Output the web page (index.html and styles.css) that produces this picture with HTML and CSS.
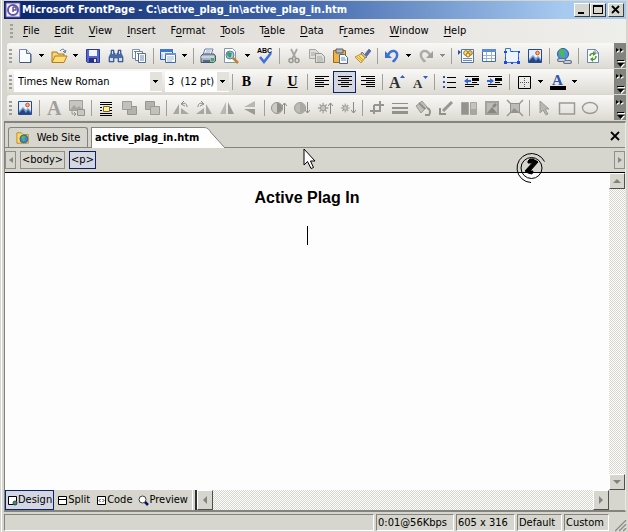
FILE: index.html
```html
<!DOCTYPE html>
<html lang="en">
<head>
<meta charset="utf-8">
<title>Microsoft FrontPage - C:\active_plag_in\active_plag_in.htm</title>
<link rel="stylesheet" href="styles.css">
</head>
<body>
<svg class="defs" width="0" height="0" aria-hidden="true">
  <defs>
    <symbol id="down" viewBox="0 0 5 3"><path d="M0 0h5v1H4v1H3v1H2V2H1V1H0z"/></symbol>
    <symbol id="pic" viewBox="0 0 16 16"><path d="M1.500 1.500h13v13h-13z" fill="#e4eefc" stroke="#1c4a9c"/><path d="M2 14v-3l4-4 3 3 2-2 3 3v3z" fill="#7c9ccc"/><path d="M2 13l4-4 3 4 2-3 3 3v1H2z" fill="#27457e"/><circle cx="10.500" cy="5" r="1.800" fill="#ffb060" stroke="#d84818"/></symbol>
    <symbol id="sun" viewBox="0 0 16 16"><path d="M7 2v12M1 8h12M3 4l8 8M11 4l-8 8" stroke="#a2a29c" stroke-width="1.500"/><circle cx="7" cy="8" r="3" fill="#c6c6be" stroke="#96968f"/></symbol>
    <symbol id="up-arrow" viewBox="0 0 5 12"><path d="M2.500 1v11M0 4l2.500-3L5 4" fill="none" stroke="#8a8a84"/></symbol>
    <symbol id="more" viewBox="0 0 12 24"><path d="M2 4l3 2-3 2zM6 4l3 2-3 2zM3 16h7v1H3zM3 19h7l-3.500 4z" fill="#fff" transform="translate(1 1)"/><path d="M2 4l3 2-3 2zM6 4l3 2-3 2zM3 16h7v1H3zM3 19h7l-3.500 4z"/></symbol>
  </defs>
</svg>
<div class="window">
  <header class="titlebar">
    <svg class="app-icon" viewBox="0 0 16 16"><path d="M1 1h14v14H1z" fill="#eeeafa" stroke="#6a5cae"/><circle cx="8" cy="8" r="5" fill="#fff" stroke="#6254a8" stroke-width="2"/><path d="M8 5v5M8 5h3v3H8" fill="none" stroke="#6254a8" stroke-width="1.500"/></svg>
    <h1>Microsoft FrontPage - C:\active_plag_in\active_plag_in.htm</h1>
    <div class="caption-buttons">
      <button aria-label="Minimize"><svg viewBox="0 0 10 10"><path d="M1 7h6v2H1z"/></svg></button><button aria-label="Maximize"><svg viewBox="0 0 10 10"><path d="M0 0h10v9H0zM1 2v6h8V2z" fill-rule="evenodd"/></svg></button><button class="close" aria-label="Close"><svg viewBox="0 0 10 10"><path d="M1 1l7 7M8 1L1 8" stroke="#000" stroke-width="1.800"/></svg></button>
    </div>
  </header>

  <nav class="menu"><span class="grip"></span>
    <button><u>F</u>ile</button><button><u>E</u>dit</button><button><u>V</u>iew</button><button><u>I</u>nsert</button><button>F<u>o</u>rmat</button><button><u>T</u>ools</button><button>T<u>a</u>ble</button><button><u>D</u>ata</button><button>F<u>r</u>ames</button><button><u>W</u>indow</button><button><u>H</u>elp</button>
  </nav>

  <div class="toolbar" role="toolbar" aria-label="Standard"><span class="grip"></span>
    <button class="tool" aria-label="New"><svg viewBox="0 0 16 16"><path d="M2.500 1.500h7l4 4v9h-11z" fill="#fafcff" stroke="#7488a8"/><path d="M9.500 1.500v4h4" fill="#cddcf0" stroke="#5a7094"/><path d="M3 14.500h11V6" fill="none" stroke="#3c587c"/></svg></button>
    <button class="drop" aria-label="New options"><svg><use href="#down"/></svg></button>
    <button class="tool" aria-label="Open"><svg viewBox="0 0 16 16"><path d="M1 14V4h5l1 2h6v3" fill="#f7d679" stroke="#a87818"/><path d="M1 14.500L4 8h12l-3 6.500z" fill="#ffdc78" stroke="#b0801c"/><path d="M9 3c2-3 5-2 5 1M12 3l2 2 1-3" fill="none" stroke="#5878a0"/></svg></button>
    <button class="drop" aria-label="Open options"><svg><use href="#down"/></svg></button>
    <button class="tool" aria-label="Save"><svg viewBox="0 0 16 16"><path d="M1.500 1.500h13v13h-12l-1-1z" fill="#5468d0" stroke="#2c3c9c"/><path d="M4 2h8v6H4z" fill="#f2f5ff"/><path d="M4 10h8v4H4z" fill="#28307c"/><path d="M9 11h2v3H9z" fill="#e8ecff"/></svg></button>
    <button class="tool" aria-label="Find"><svg viewBox="0 0 16 16"><path d="M3 2h3v3h1v2h2V5h1V2h3v3l2 4v5h-5v-4H6v4H1V9l2-4z" fill="#4a6ca8" stroke="#2a4880" stroke-width=".6"/><path d="M2 10h3v3H2zM11 10h3v3h-3zM4 3h1v3H4zM11 3h1v3h-1z" fill="#cfe0fa"/></svg></button>
    <button class="tool" aria-label="Publish"><svg viewBox="0 0 16 16"><path d="M1.500 1.500h7v9h-7z" fill="#fff" stroke="#7d93b5"/><path d="M4.500 3.500h7v9h-7z" fill="#fff" stroke="#6580a8"/><path d="M7.500 5.500h7v9h-7z" fill="#fff" stroke="#4c6c9c"/><path d="M9 8h4M9 10h4M9 12h4M3 3.500h4M6 5.500h4" stroke="#6880a8"/></svg></button>
    <span class="sep"></span>
    <button class="tool" aria-label="Task pane"><svg viewBox="0 0 16 16"><path d="M.5 1.500h12v10H.5z" fill="#e8f0ff" stroke="#2e5cb4"/><path d="M0 1h13v3H0z" fill="#3d78d8"/><path d="M5.500 5.500h10v9h-10z" fill="#fff" stroke="#3c68b0"/><path d="M5 5h11v2H5z" fill="#6594e0"/><path d="M7 9h7M7 11h7M7 13h5M2 6v5" stroke="#9cb4d8"/></svg></button>
    <button class="drop" aria-label="Task pane options"><svg><use href="#down"/></svg></button>
    <span class="sep"></span>
    <button class="tool" aria-label="Print"><svg viewBox="0 0 16 16"><path d="M5 1h8l-2 6H3z" fill="#fff" stroke="#667fa8"/><path d="M6 3h5M5 5h5" stroke="#8ba4c8"/><path d="M1 8l2-2h11l1.500 2v5l-2 1.500H1z" fill="#a8b4c4" stroke="#46566c"/><path d="M1 9h13" stroke="#eef2f6"/><path d="M3 12h7v2H3z" fill="#586880"/><path d="M11 10h3v3h-3z" fill="#38b44a"/></svg></button>
    <button class="tool" aria-label="Preview in browser"><svg viewBox="0 0 16 16"><path d="M1.500.5h8l3 3v11h-11z" fill="#fff" stroke="#8296b4"/><circle cx="7" cy="7" r="4" fill="#a0d0d8" stroke="#607c94"/><path d="M4 6c1-3 3-1 5-1-1 2 0 3-2 5-1-1-3-2-3-4" fill="#3f9a74"/><path d="M10 10l5 5" stroke="#c08030" stroke-width="2.500"/></svg></button>
    <button class="drop" aria-label="Preview options"><svg><use href="#down"/></svg></button>
    <button class="tool" aria-label="Spelling"><svg viewBox="0 0 16 16"><text class="abc" x="0" y="5">ABC</text><path d="M3 9l4 5 7-9" fill="none" stroke="#3a70d8" stroke-width="2.500"/></svg></button>
    <span class="sep"></span>
    <button class="tool" aria-label="Cut" disabled><svg viewBox="0 0 16 16"><path d="M5 1l5 10M11 1L6 11" stroke="#a6a6a0" stroke-width="1.800"/><circle cx="5" cy="12.500" r="2" fill="none" stroke="#989892" stroke-width="1.500"/><circle cx="11" cy="12.500" r="2" fill="none" stroke="#989892" stroke-width="1.500"/></svg></button>
    <button class="tool" aria-label="Copy" disabled><svg viewBox="0 0 16 16"><path d="M.5 1.500h6l3 3v6h-9z" fill="#dededa" stroke="#a4a49e"/><path d="M6.500 5.500h6l3 3v6h-9z" fill="#dededa" stroke="#94948e"/><path d="M2 5h5M2 7h4M8 9h5M8 11h6M8 13h6" stroke="#a8a8a2"/></svg></button>
    <button class="tool" aria-label="Paste"><svg viewBox="0 0 16 16"><path d="M1.500 2.500h12v12h-12z" fill="#f0b440" stroke="#9a6a18"/><path d="M4 1h7v4H4z" fill="#b4b8c0" stroke="#58606c"/><path d="M7.500 6.500h5l3 3v6h-8z" fill="#f6faff" stroke="#4c6898"/><path d="M9 10h4M9 12h5" stroke="#6c8cbc"/></svg></button>
    <button class="tool" aria-label="Format Painter"><svg viewBox="0 0 16 16"><path d="M10 6l4-5 2 2-4 5z" fill="#5c6ca8" stroke="#3c4880" stroke-width=".5"/><path d="M7 4l5 5-2 1-4-4z" fill="#b8bcc4" stroke="#74747c"/><path d="M6 6l4 4-4 5-6-6z" fill="#ffe070" stroke="#b89030"/><path d="M2 9l5 4M4 8l4 4" stroke="#c8a038"/></svg></button>
    <span class="sep"></span>
    <button class="tool" aria-label="Undo"><svg viewBox="0 0 16 16"><path d="M4 7c3-6 10-5 9 1 0 3-3 4-4 6" fill="none" stroke="#3d70d0" stroke-width="2.500"/><path d="M1 3v7h7z" fill="#3d70d0"/></svg></button>
    <button class="drop" aria-label="Undo history"><svg><use href="#down"/></svg></button>
    <button class="tool" aria-label="Redo" disabled><svg viewBox="0 0 16 16"><path d="M12 7C9 1 2 2 3 8c0 3 3 4 4 6" fill="none" stroke="#acaca6" stroke-width="2.500"/><path d="M15 3v7H8z" fill="#a0a09a"/></svg></button>
    <button class="drop" aria-label="Redo history" disabled><svg><use href="#down"/></svg></button>
    <span class="sep"></span>
    <button class="tool" aria-label="Web Component"><svg viewBox="0 0 16 16"><path d="M3.500 1.500h12v13h-12z" fill="#f4f8ff" stroke="#5474a8"/><path d="M0 2l3 2-3 3z" fill="#2050a8"/><circle cx="8" cy="5" r="2.300" fill="#ffe48c" stroke="#a07018"/><circle cx="12" cy="5" r="2.300" fill="#f4c84c" stroke="#a07018"/><circle cx="10" cy="7" r="2" fill="#ffe48c" stroke="#a07018"/><path d="M5 10.500h9M5 12.500h9" stroke="#7088b4"/></svg></button>
    <button class="tool" aria-label="Insert Table"><svg viewBox="0 0 16 16"><path d="M1.500 1.500h13v12h-13z" fill="#fff" stroke="#4268a8"/><path d="M1 1h14v3H1z" fill="#5c8cd8"/><path d="M2 7.500h12M2 10.500h12M5.500 4v9M10.500 4v9" stroke="#9ab4dc"/></svg></button>
    <button class="tool" aria-label="Insert Layer"><svg viewBox="0 0 16 16"><path d="M1.500 3.500v-3h5v3h8v11h-13z" fill="#eaf3ff" stroke="#3a78d8"/><path d="M0 3h3v2H0zM7 3h2v1H7zM14 3h2v2h-2zM1 9h1v2H1zM14 9h1v2h-1zM0 13h3v3H0zM7 14h2v2H7zM13 13h3v3h-3z" fill="#1c48f0"/></svg></button>
    <button class="tool" aria-label="Insert Picture"><svg><use href="#pic"/></svg></button>
    <span class="sep"></span>
    <button class="tool" aria-label="Insert Hyperlink"><svg viewBox="0 0 16 16"><circle cx="7" cy="6" r="5.500" fill="#4c94e0" stroke="#285ca0"/><path d="M3 3c3-3 4-1 6-1-2 3 1 4-2 8-2-1 0-3-4-4z" fill="#50b850"/><path d="M3 12h5M9 14h5" stroke="#62708a" stroke-width="4" stroke-linecap="round"/><path d="M3 12h5M9 14h5" stroke="#e8ecf2" stroke-width="1.500" stroke-linecap="round"/></svg></button>
    <span class="sep"></span>
    <button class="tool" aria-label="Refresh"><svg viewBox="0 0 16 16"><path d="M2.500 1.500h8l3 3v10h-11z" fill="#fafdff" stroke="#6e86aa"/><path d="M10 1v4h4" fill="none" stroke="#6e86aa"/><path d="M5 8c0-2 2-3 4-2M11 8c0 3-2 4-4 3" fill="none" stroke="#4c9a28" stroke-width="1.500"/><path d="M8 3l3 3-3 2zM8 9v5l-3-3z" fill="#4c9a28"/></svg></button>
    <button class="more" aria-label="Toolbar options"><svg><use href="#more"/></svg></button>
  </div>

  <div class="toolbar" role="toolbar" aria-label="Formatting"><span class="grip"></span>
    <label class="combo font"><select aria-label="Font"><option>Times New Roman</option></select><svg><use href="#down"/></svg></label>
    <label class="combo size"><select aria-label="Font Size"><option>3&nbsp; (12 pt)</option></select><svg><use href="#down"/></svg></label>
    <span class="sep"></span>
    <button class="tool letter bold">B</button><button class="tool letter italic">I</button><button class="tool letter under">U</button>
    <span class="sep"></span>
    <button class="tool" aria-label="Align Left"><svg viewBox="0 0 16 16"><path d="M1 2.500h14M1 4.500h9M1 6.500h14M1 8.500h9M1 10.500h14M1 12.500h9" stroke="#000"/></svg></button>
    <button class="tool on" aria-label="Center" aria-pressed="true"><svg viewBox="0 0 16 16"><path d="M1 2.500h14M4 4.500h8M1 6.500h14M4 8.500h8M1 10.500h14M4 12.500h8" stroke="#000"/></svg></button>
    <button class="tool" aria-label="Align Right"><svg viewBox="0 0 16 16"><path d="M1 2.500h14M6 4.500h9M1 6.500h14M6 8.500h9M1 10.500h14M6 12.500h9" stroke="#000"/></svg></button>
    <span class="sep"></span>
    <button class="tool" aria-label="Increase Font Size"><svg viewBox="0 0 16 16"><text class="glyph" x="0" y="14" font-size="16">A</text><path d="M11 4l2.500-3L16 4z" fill="#2c5cc0"/></svg></button>
    <button class="tool" aria-label="Decrease Font Size"><svg viewBox="0 0 16 16"><text class="glyph" x="1" y="14" font-size="13">A</text><path d="M11 2h5l-2.500 3z" fill="#2c5cc0"/></svg></button>
    <span class="sep"></span>
    <button class="tool" aria-label="Bullets"><svg viewBox="0 0 16 16"><path d="M2 2h2v2H2zM2 7h2v2H2zM2 12h2v2H2z" fill="#2c58b4"/><path d="M6 3.500h9M6 8.500h9M6 13.500h9" stroke="#000"/></svg></button>
    <button class="tool" aria-label="Decrease Indent"><svg viewBox="0 0 16 16"><path d="M1 2.500h14M8 8.500h5M1 10.500h14M1 12.500h9" stroke="#000"/><path d="M8 4h7v3H8z"/><path d="M0 7l4-3v2h3v2H4v2z" fill="#3468d8"/></svg></button>
    <button class="tool" aria-label="Increase Indent"><svg viewBox="0 0 16 16"><path d="M1 2.500h14M8 8.500h5M1 10.500h14M1 12.500h9" stroke="#000"/><path d="M8 4h7v3H8z"/><path d="M7 7L3 4v2H0v2h3v2z" fill="#3468d8"/></svg></button>
    <span class="sep"></span>
    <button class="tool" aria-label="Borders"><svg viewBox="0 0 16 16"><path d="M2.500 2.500h12v12h-12z" fill="none" stroke="#000"/><path d="M8.500 4v9M4 8.500h9" stroke="#50506c" stroke-dasharray="1 1"/></svg></button>
    <button class="drop" aria-label="Border options"><svg><use href="#down"/></svg></button>
    <button class="tool" aria-label="Font Color"><svg viewBox="0 0 16 16"><text class="glyph blue" x="2" y="11" font-size="15">A</text><path d="M0 12h16v4H0z"/></svg></button>
    <button class="drop" aria-label="Color options"><svg><use href="#down"/></svg></button>
    <button class="more" aria-label="Toolbar options"><svg><use href="#more"/></svg></button>
  </div>

  <div class="toolbar" role="toolbar" aria-label="Pictures"><span class="grip"></span>
    <button class="tool" aria-label="Insert Picture From File"><svg><use href="#pic"/></svg></button>
    <span class="sep"></span>
    <button class="tool" aria-label="Text" disabled><svg viewBox="0 0 16 16"><text class="glyph gray" x="1" y="15" font-size="20">A</text></svg></button>
    <button class="tool" aria-label="Auto Thumbnail" disabled><svg viewBox="0 0 16 16"><path d="M.5.500h13v10H.5z" fill="#c6c6c0" stroke="#a0a09a"/><path d="M1 10l4-5 3 3 2-2 4 4" fill="#a6a6a0"/><path d="M8.500 9.500h7v6h-7z" fill="#c8c8c2" stroke="#94948e"/><path d="M3 11v3h4M5 12l2 2-2 2" fill="none" stroke="#94948e"/></svg></button>
    <span class="sep"></span>
    <button class="tool" aria-label="Position Absolutely"><svg viewBox="0 0 16 16"><path d="M2 2.500h12M2 4.500h12M2 7.500h2M12 7.500h2M2 10.500h2M12 10.500h2M2 13.500h12M2 15.500h12" stroke="#000"/><path d="M5.500 6.500h6v5h-6z" fill="#fff0a0" stroke="#786820"/></svg></button>
    <button class="tool" aria-label="Bring Forward" disabled><svg viewBox="0 0 16 16"><path d="M6.500 6.500h9v8h-9z" fill="#b4b4ae" stroke="#969690"/><path d="M1.500 1.500h9v8h-9z" fill="#c2c2bc" stroke="#9c9c96"/></svg></button>
    <button class="tool" aria-label="Send Backward" disabled><svg viewBox="0 0 16 16"><path d="M1.500 1.500h9v8h-9z" fill="#b4b4ae" stroke="#969690"/><path d="M6.500 6.500h9v8h-9z" fill="#c2c2bc" stroke="#9c9c96"/></svg></button>
    <span class="sep"></span>
    <button class="tool" aria-label="Rotate Left" disabled><svg viewBox="0 0 16 16"><path d="M6 4v10H0zM8 8l8 6H8z" fill="#a8a8a2"/><path d="M9 4c3-2 5 0 5 3M11 1L8 4l4 2" fill="none" stroke="#8a8a84"/></svg></button>
    <button class="tool" aria-label="Rotate Right" disabled><svg viewBox="0 0 16 16"><path d="M10 4v10h6zM8 8l-8 6h8z" fill="#a8a8a2"/><path d="M7 4C4 2 2 4 2 7M5 1l3 3-4 2" fill="none" stroke="#8a8a84"/></svg></button>
    <button class="tool" aria-label="Flip Horizontal" disabled><svg viewBox="0 0 16 16"><path d="M7 2v12H1z" fill="#b8b8b2"/><path d="M9 2v12h6z" fill="#9c9c96"/></svg></button>
    <button class="tool" aria-label="Flip Vertical" disabled><svg viewBox="0 0 16 16"><path d="M13 1v6H2z" fill="#b8b8b2"/><path d="M13 15V9H2z" fill="#9c9c96"/></svg></button>
    <span class="sep"></span>
    <button class="tool" aria-label="More Contrast" disabled><svg viewBox="0 0 16 16"><circle cx="6" cy="8" r="5.500" fill="#ccccc6" stroke="#94948e"/><path d="M6 3a5 5 0 010 10z" fill="#92928c"/><use href="#up-arrow" x="11" y="2" width="5" height="12"/></svg></button>
    <button class="tool" aria-label="Less Contrast" disabled><svg viewBox="0 0 16 16"><circle cx="6" cy="8" r="5.500" fill="#bcbcb6" stroke="#9c9c96"/><path d="M6 3a5 5 0 010 10z" fill="#aaaaa4"/><use href="#up-arrow" x="11" y="-14" width="5" height="12" transform="scale(1 -1)"/></svg></button>
    <button class="tool" aria-label="More Brightness" disabled><svg viewBox="0 0 16 16"><use href="#sun" x="0" y="0" width="14" height="16"/><use href="#up-arrow" x="11" y="2" width="5" height="12"/></svg></button>
    <button class="tool" aria-label="Less Brightness" disabled><svg viewBox="0 0 16 16"><use href="#sun" x="0" y="2" width="12" height="12"/><use href="#up-arrow" x="11" y="-14" width="5" height="12" transform="scale(1 -1)"/></svg></button>
    <span class="sep"></span>
    <button class="tool" aria-label="Crop" disabled><svg viewBox="0 0 16 16"><path d="M5 5v9M1 11h10V2M5 5h10M11 1v4" fill="none" stroke="#969690" stroke-width="2"/></svg></button>
    <button class="tool" aria-label="Line Style" disabled><svg viewBox="0 0 16 16"><path d="M0 3.500h16" stroke="#92928c"/><path d="M0 8h16" stroke="#92928c" stroke-width="2"/><path d="M0 12.500h16" stroke="#92928c" stroke-width="3"/></svg></button>
    <button class="tool" aria-label="Format Picture" disabled><svg viewBox="0 0 16 16"><path d="M1 6l6-5 5 6-6 6z" fill="#c0c0ba" stroke="#9a9a94"/><path d="M4 3l6 6M12 8c3 1 4 4 2 7h-4" fill="none" stroke="#92928c" stroke-width="2"/></svg></button>
    <button class="tool" aria-label="Set Transparent Color" disabled><svg viewBox="0 0 16 16"><path d="M14 2L5 11" stroke="#989892" stroke-width="3"/><path d="M2 8v6h6" fill="none" stroke="#92928c" stroke-width="2"/></svg></button>
    <button class="tool" aria-label="Color" disabled><svg viewBox="0 0 16 16"><path d="M.5 2.500h7v12h-7z" fill="#94948e" stroke="#a6a6a0"/><path d="M9.500 2.500h6v12h-6z" fill="#c4c4be" stroke="#a6a6a0"/><path d="M10 9h5v5h-5z" fill="#a8a8a2"/></svg></button>
    <button class="tool" aria-label="Bevel" disabled><svg viewBox="0 0 16 16"><path d="M1 1h14v14H1z" fill="#a2a29c"/><path d="M3 3h10v10H3z" fill="#bcbcb6"/><path d="M3 13l5-6 5 6zM8 6l3-3 2 2-3 3z" fill="#888882"/></svg></button>
    <button class="tool" aria-label="Resample" disabled><svg viewBox="0 0 16 16"><path d="M0 0l16 16M16 0L0 16" stroke="#989892" stroke-width="1.500"/><path d="M3.500 3.500h9v9h-9z" fill="#bcbcb6" stroke="#92928c"/><path d="M4 12l3-4 5 4" fill="#94948e"/></svg></button>
    <span class="sep"></span>
    <button class="tool" aria-label="Select" disabled><svg viewBox="0 0 16 16"><path d="M4 1v12l3-3 3 5 2-1-3-5h4z" fill="#b8b8b2" stroke="#9a9a94"/></svg></button>
    <button class="tool" aria-label="Rectangular Hotspot" disabled><svg viewBox="0 0 16 16"><path d="M.5 3h15v11H.5z" fill="none" stroke="#9a9a94" stroke-width="1.500"/></svg></button>
    <button class="tool" aria-label="Circular Hotspot" disabled><svg viewBox="0 0 16 16"><ellipse cx="8" cy="8" rx="7.500" ry="5.500" fill="none" stroke="#9a9a94" stroke-width="1.300"/></svg></button>
    <button class="more" aria-label="Toolbar options"><svg><use href="#more"/></svg></button>
  </div>

  <main class="editor">
    <div class="tabs">
      <button class="tab"><svg viewBox="0 0 16 16"><path d="M1 14V2h5l2 2h6v10z" fill="#ffd468" stroke="#b88820"/><circle cx="9" cy="9" r="4.500" fill="#3c88d8" stroke="#285c98"/><path d="M6 7c2-3 3-1 5-1-2 2 0 3-2 6-2-2-1-3-3-5" fill="#58b848"/></svg>Web Site</button>
      <div class="active"><button>active_plag_in.htm</button><svg viewBox="0 0 23 21"><path d="M0 0h1c4 0 5 3 7 6l14 15H0z" fill="#fff"/><path d="M0 .5h1c4 0 5 2 7 5L22 21" fill="none" stroke="#84847e"/></svg></div>
      <button class="tab-close" aria-label="Close page"><svg viewBox="0 0 8 8"><path d="M0 0l8 8M8 0L0 8" stroke="#000" stroke-width="1.800"/></svg></button>
    </div>
    <div class="tags">
      <button class="scroll-tag" aria-label="Scroll tags left"><svg viewBox="0 0 4 6"><path d="M4 0v6L0 3z" fill="#888882"/></svg></button>
      <button class="tag">&lt;body&gt;</button><button class="tag current">&lt;p&gt;</button>
      <button class="scroll-tag last" aria-label="Scroll tags right"><svg viewBox="0 0 4 6"><path d="M0 0v6l4-3z" fill="#888882"/></svg></button>
    </div>
    <div class="canvas">
      <article contenteditable="true" spellcheck="false"><h2>Active Plag In</h2><p><span class="caret"></span></p></article>
      <div class="vscroll">
        <button aria-label="Scroll up"><svg viewBox="0 0 8 4"><path d="M4 0l4 4H0z" fill="#84847e"/></svg></button>
        <button aria-label="Scroll down"><svg viewBox="0 0 8 4"><path d="M0 0h8L4 4z" fill="#84847e"/></svg></button>
      </div>
    </div>
    <div class="views">
      <button class="view chosen"><svg viewBox="0 0 11 11"><path d="M1.500 1.500h8v8h-8z" fill="#fff" stroke="#000"/><circle cx="8" cy="8" r="2" fill="#409848" stroke="#244878"/></svg>Design</button>
      <button class="view"><svg viewBox="0 0 11 11"><path d="M1.500 1.500h8v8h-8zM1.500 4.500h8" fill="#fff" stroke="#000"/></svg>Split</button>
      <button class="view"><svg viewBox="0 0 11 11"><path d="M1.500 1.500h8v8h-8z" fill="#fff" stroke="#000"/><path d="M4.500 4L3 5.500 4.500 7M6.500 4L8 5.500 6.500 7" fill="none" stroke="#000" stroke-width=".8"/></svg>Code</button>
      <button class="view"><svg viewBox="0 0 11 11"><circle cx="4.500" cy="4.500" r="3.500" fill="#fff" stroke="#404040"/><path d="M7 7l3 3" stroke="#101070" stroke-width="2.500"/></svg>Preview</button>
      <span class="splitter"></span>
      <button class="arrow" aria-label="Scroll left"><svg viewBox="0 0 4 8"><path d="M4 0v8L0 4z" fill="#84847e"/></svg></button>
      <span class="track"></span>
      <button class="arrow" aria-label="Scroll right"><svg viewBox="0 0 4 8"><path d="M0 0v8l4-4z" fill="#84847e"/></svg></button>
      <span class="corner"></span>
    </div>
  </main>

  <footer class="status">
    <span class="pane message"></span><span class="pane speed">0:01@56Kbps</span><span class="pane dims">605 x 316</span><span class="pane mode">Default</span><span class="pane mode">Custom</span>
    <svg class="resize" viewBox="0 0 12 12"><path d="M0 12L12 0M4 12l8-8M8 12l4-4" stroke="#fff"/><path d="M1 12L12 1M5 12l7-7M9 12l3-3" stroke="#8c8c86" stroke-width="1.500"/></svg>
  </footer>
</div>

<svg class="badge" viewBox="0 0 32 32" aria-hidden="true"><path d="M29.500 9.500A14.500 14.500 0 1 0 16 30.500" fill="none" stroke="#000"/><circle cx="16.500" cy="16" r="10.500" fill="none" stroke="#000"/><path d="M13 9l2-2h4v2l-3 2h-3zM20 8l3 2-8 9h3l-1 3-4-1-3-2z" stroke="#000"/></svg>
<svg class="pointer" viewBox="0 0 13 22" aria-hidden="true"><path d="M1 1v16l3.500-3.500L8 20.500l2.500-1-3-6.500H12z" fill="#fff" stroke="#000"/></svg>
</body>
</html>
```
FILE: styles.css
```css
* { box-sizing: border-box; }
body {
  margin: 0;
  background: #d6d6ce;
  color: #000;
  font: 11px/14px "DejaVu Sans Condensed", "DejaVu Sans", sans-serif;
}
button {
  margin: 0;
  padding: 0;
  border: 0;
  background: none;
  color: inherit;
  font: inherit;
  display: flex;
  align-items: center;
  justify-content: center;
}
svg { display: block; flex: none; overflow: visible; }
.defs { position: absolute; }

.window {
  height: 100vh;
  display: flex;
  flex-direction: column;
  padding: 1px 2px 1px 3px;
  border-left: 1px solid #d6d6ce;
  box-shadow: inset 1px 0 #fff;
}

.titlebar {
  height: 18px;
  flex: none;
  display: flex;
  align-items: center;
  gap: 1px;
  padding: 0 2px 0 1px;
  background: linear-gradient(90deg, #0a246a, #3c62a8 45%, #a6caf0 90%);
  color: #fff;
}
.titlebar h1 { margin: 0; flex: 1; font-size: 11px; line-height: 18px; white-space: nowrap; }
.app-icon { width: 16px; height: 16px; }
.caption-buttons { display: flex; }
.caption-buttons button {
  width: 16px;
  height: 14px;
  background: #d6d6ce;
  border: 1px solid;
  border-color: #fff #404040 #404040 #fff;
}
.caption-buttons .close { margin-left: 2px; }
.caption-buttons svg { width: 10px; height: 10px; }

.grip {
  flex: none;
  width: 3px;
  height: 14px;
  margin: 0 3px;
  background: repeating-linear-gradient(#a0a09a 0 2px, transparent 2px 4px);
}
.menu {
  height: 24px;
  flex: none;
  display: flex;
  align-items: center;
  padding: 0 0 0 3px;
  background: linear-gradient(90deg, #d6d6ce, #e6e2de 45%, #eeeeea);
}
.menu button { padding: 0 7px 0 8px; display: block; line-height: 18px; }
.menu .grip { margin-right: 2px; }
.menu u { text-underline-offset: 2px; }

.toolbar {
  height: 25px;
  flex: none;
  display: flex;
  align-items: center;
  margin: 0 0 1px 3px;
  border-radius: 3px 0 0 3px;
  background: linear-gradient(#f8f8f6, #eceae6 50%, #dcdad2);
}
.toolbar .grip { margin-left: 2px; margin-right: 1px; }
.tool { width: 23px; height: 22px; flex: none; }
.tool svg { width: 16px; height: 16px; }
.tool.on { border: 1px solid #0a246a; background: #d4d6e2; }
.drop { width: 11px; height: 22px; flex: none; }
.drop svg, .combo svg { width: 5px; height: 3px; }
.drop:disabled { fill: #8c8c86; }
.sep { flex: none; width: 6px; height: 16px; }
.sep::before { content: ""; display: block; width: 1px; height: 16px; margin-left: 3px; background: #a0a09a; }
.more { width: 12px; height: 25px; flex: none; margin-left: auto; background: #84847e; }
.more svg { width: 12px; height: 24px; }
.abc { font: bold 7px "Liberation Sans", sans-serif; }
.glyph { font-family: "Liberation Serif", serif; font-weight: bold; fill: #303030; }
.glyph.blue { fill: #2c58b0; }
.glyph.gray { fill: #a0a09a; }
.letter { font: bold 14px/16px "Liberation Serif", serif; }
.italic { font-style: italic; }
.under { text-decoration: underline; }

.combo { display: grid; align-items: center; height: 21px; background: #fff; }
.combo select, .combo svg { grid-area: 1 / 1; }
.combo svg { justify-self: end; margin-right: 4px; pointer-events: none; }
.combo select {
  appearance: none;
  width: 100%;
  height: 21px;
  padding: 0 12px 0 4px;
  border: 0;
  border-radius: 0;
  background: linear-gradient(#e4e2dc, #e4e2dc) right / 12px 19px no-repeat #fff;
  color: #000;
  font: inherit;
}
.combo.font { width: 148px; margin-left: 1px; }
.combo.size { width: 64px; margin-left: 3px; }
.combo.size select { padding-left: 3px; }

.editor {
  flex: 1;
  min-height: 0;
  display: flex;
  flex-direction: column;
  border: 1px solid #84847e;
  border-width: 2px 1px 2px 1px;
  border-right-color: #e8e8e4;
}
.tabs {
  height: 25px;
  flex: none;
  display: flex;
  align-items: flex-end;
  padding-left: 3px;
  border-bottom: 1px solid #84847e;
}
.tab {
  height: 20px;
  width: 80px;
  gap: 7px;
  border: 1px solid #84847e;
  border-bottom: 0;
  border-radius: 3px 3px 0 0;
}
.tab svg { width: 14px; height: 14px; }
.active { display: flex; height: 21px; margin: 0 0 -1px 3px; }
.active button {
  padding: 0 4px 0 3px;
  border: 1px solid #84847e;
  border-width: 1px 0 0 1px;
  background: #fff;
  font-weight: bold;
}
.active svg { width: 23px; height: 21px; }
.tab-close { margin-left: auto; width: 21px; height: 23px; }
.tab-close svg { width: 8px; height: 8px; }

.tags {
  height: 25px;
  flex: none;
  display: flex;
  align-items: center;
  gap: 4px;
  border-bottom: 1px solid #000;
}
.tags button { height: 18px; border: 1px solid #909088; }
.tags .scroll-tag { width: 11px; }
.tags .last { margin-left: auto; }
.scroll-tag svg { width: 4px; height: 6px; }
.tags .tag { padding: 0 1px; }
.tags .current { border-color: #0a246a; background: #d4d6e2; }

.canvas { flex: 1; min-height: 0; display: flex; background: #fdfdfd; }
.canvas article {
  flex: 1;
  padding: 15px 0;
  outline: 0;
  text-align: center;
  font: 16px/19px "Liberation Sans", sans-serif;
}
.canvas h2 { margin: 0 0 19px; font-size: 16px; line-height: 19px; }
.canvas p { margin: 0; }
.caret { display: inline-block; width: 1px; height: 19px; background: #000; vertical-align: top; }
.vscroll, .track { background: repeating-conic-gradient(#fff 0 25%, #d6d6ce 0 50%) 0 0 / 2px 2px; }
.vscroll { width: 16px; display: flex; flex-direction: column; justify-content: space-between; }
.vscroll button, .arrow {
  width: 16px;
  height: 16px;
  flex: none;
  background: #d6d6ce;
  border: 1px solid;
  border-color: #fff #505050 #505050 #fff;
}
.vscroll svg { width: 8px; height: 4px; }

.views { height: 20px; flex: none; display: flex; }
.view { padding: 0 2px; border: 1px solid transparent; }
.view.chosen { padding: 0 1px; border-color: #0a246a; background: #d4d6e2; }
.view svg { width: 11px; height: 11px; }
.splitter { width: 5px; margin-left: 1px; border-left: 1px solid #fff; border-right: 2px solid #303030; }
.views .arrow { height: 20px; }
.arrow svg { width: 4px; height: 8px; }
.track { flex: 1; }
.corner { width: 16px; }

.status { height: 19px; flex: none; display: flex; align-items: flex-end; gap: 2px; }
.pane {
  height: 17px;
  padding: 0 1px;
  border: 1px solid;
  border-color: #84847e #fff #fff #84847e;
  line-height: 15px;
  white-space: nowrap;
}
.message { flex: 1; }
.speed { width: 78px; }
.dims { width: 59px; }
.mode { width: 45px; }
.resize { width: 12px; height: 12px; margin-left: 3px; }

.badge { position: absolute; left: 515px; top: 152px; width: 32px; height: 32px; }
.pointer { position: absolute; left: 303px; top: 148px; width: 13px; height: 22px; }
```
